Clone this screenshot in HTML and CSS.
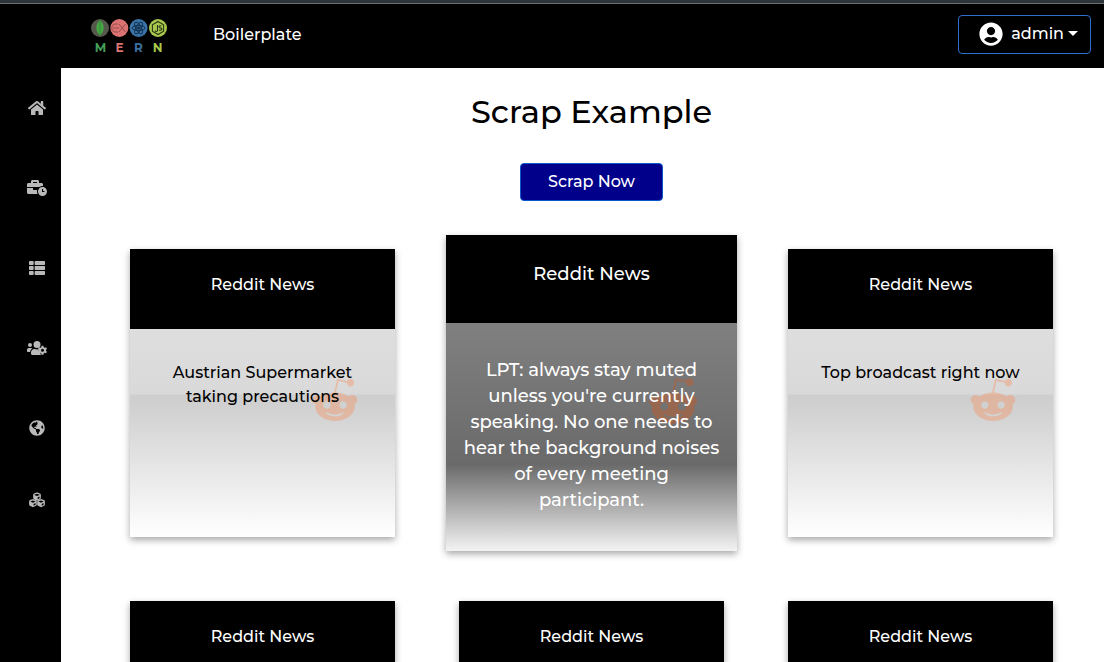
FILE: index.html
```html
<!DOCTYPE html>
<html lang="en">
<head>
<meta charset="utf-8">
<meta name="viewport" content="width=device-width, initial-scale=1">
<title>MERN Boilerplate</title>
<link rel="stylesheet" href="styles.css">
</head>
<body>
<svg class="sprite" aria-hidden="true">
  <symbol id="reddit" viewBox="0 0 512 512"><path d="M440.3 203.5c-15 0-28.2 6.2-37.9 15.9-35.7-24.7-83.8-40.6-137.1-42.3L293 52.3l88.2 19.8c0 21.6 17.6 39.2 39.2 39.2 22 0 39.7-18.1 39.7-39.7s-17.6-39.7-39.7-39.7c-15.4 0-28.7 9.3-35.3 22l-97.4-21.6c-4.9-1.3-9.7 2.2-11 7.1L246.3 177c-52.9 2.2-100.5 18.1-136.3 42.8-9.7-10.1-23.4-16.3-38.4-16.3-55.6 0-73.8 74.6-22.9 100.1-1.8 7.9-2.6 16.3-2.6 24.7 0 83.8 94.4 151.7 210.3 151.7 116.4 0 210.8-67.9 210.8-151.7 0-8.4-.9-17.2-3.1-25.1 49.9-25.6 31.5-99.7-23.8-99.7zM129.4 308.9c0-22 17.6-39.7 39.7-39.7 21.6 0 39.2 17.6 39.2 39.7 0 21.6-17.6 39.2-39.2 39.2-22 .1-39.7-17.6-39.7-39.2zm214.3 93.5c-36.4 36.4-139.1 36.4-175.5 0-4-3.5-4-9.7 0-13.7 3.5-3.5 9.7-3.5 13.2 0 27.8 28.5 120 29 149 0 3.5-3.5 9.7-3.5 13.2 0 4.1 4 4.1 10.2.1 13.7zm-.8-54.2c-21.6 0-39.2-17.6-39.2-39.2 0-22 17.6-39.7 39.2-39.7 22 0 39.7 17.6 39.7 39.7-.1 21.5-17.7 39.2-39.7 39.2z"/></symbol>
</svg>
<header class="topbar">
  <a class="logo" href="#" aria-label="MERN">
    <svg class="logo-marks" viewBox="0 0 76 20" aria-hidden="true">
      <circle cx="9" cy="10" r="9" fill="#55594b"/>
      <path d="M9 2C12 5 13 8 12.500 11.500 12 14 10.500 16 9 17.500 7.500 16 6 14 5.500 11.500 5 8 6 5 9 2z" fill="#44a843"/>
      <path d="M9 2v16" stroke="#2d7e35" stroke-width=".7"/>
      <circle cx="28.300" cy="10" r="9" fill="#dc7272"/>
      <path d="M27 6h-2.500c-5 0-5 8 0 8H27M22 10h6M28 6l6.500 8M34.500 6L28 14" fill="none" stroke="#8d4b4b" stroke-width=".9"/>
      <circle cx="47.600" cy="10" r="9" fill="#3a73a8"/>
      <g fill="none" stroke="#12304d" stroke-width="1">
        <ellipse cx="47.600" cy="10" rx="6.500" ry="2.500"/>
        <ellipse cx="47.600" cy="10" rx="6.500" ry="2.500" transform="rotate(60 47.600 10)"/>
        <ellipse cx="47.600" cy="10" rx="6.500" ry="2.500" transform="rotate(120 47.600 10)"/>
      </g>
      <circle cx="47.600" cy="10" r="1.500" fill="#12304d"/>
      <circle cx="67" cy="10" r="9" fill="#a9c84c"/>
      <path d="M67 3.500l5.600 3.200v6.600L67 16.500l-5.600-3.200V6.700zM66.500 7v5.500c0 1.200-2 1.200-2.500.3M70.500 8c-2.800-1-3.300 1.500-1.200 1.900 2.500.4 2 3.100-1.300 2" fill="none" stroke="#26361a" stroke-width="1.100"/>
    </svg>
    <span class="logo-letters"><b class="m">M</b><b class="e">E</b><b class="r">R</b><b class="n">N</b></span>
  </a>
  <span class="brand">Boilerplate</span>
  <button class="user" type="button">
    <svg class="avatar" viewBox="0 0 496 512" aria-hidden="true"><path d="M248 8C111 8 0 119 0 256s111 248 248 248 248-111 248-248S385 8 248 8zm0 96c48.600 0 88 39.400 88 88s-39.400 88-88 88-88-39.400-88-88 39.400-88 88-88zm0 344c-58.700 0-111.300-26.600-146.500-68.200 18.800-35.400 55.600-59.800 98.500-59.800 2.400 0 4.800.4 7.100 1.100 13 4.200 26.600 6.900 40.900 6.900 14.300 0 28-2.700 40.900-6.900 2.300-.7 4.700-1.100 7.100-1.100 42.900 0 79.700 24.400 98.500 59.800C359.300 421.400 306.700 448 248 448z"/></svg>
    <span>admin</span>
    <span class="caret"></span>
  </button>
</header>
<div class="shell">
  <nav class="sidebar" aria-label="Main">
    <a href="#" aria-label="Home"><svg class="wide" viewBox="0 0 576 512"><path d="M280.370 148.260L96 300.110V464a16 16 0 0 0 16 16l112.060-.29a16 16 0 0 0 15.920-16V368a16 16 0 0 1 16-16h64a16 16 0 0 1 16 16v95.640a16 16 0 0 0 16 16.050L464 480a16 16 0 0 0 16-16V300L295.670 148.260a12.190 12.190 0 0 0-15.300 0zM571.600 251.470L488 182.560V44.050a12 12 0 0 0-12-12h-56a12 12 0 0 0-12 12v72.610L318.470 43a48 48 0 0 0-61 0L4.340 251.470a12 12 0 0 0-1.600 16.900l25.500 31A12 12 0 0 0 45.150 301l235.220-193.740a12.190 12.190 0 0 1 15.300 0L530.900 301a12 12 0 0 0 16.900-1.600l25.500-31a12 12 0 0 0-1.700-16.930z"/></svg></a>
    <a href="#" aria-label="Jobs"><svg class="wide" viewBox="0 0 640 512"><path d="M496 224c-79.590 0-144 64.410-144 144s64.410 144 144 144 144-64.410 144-144-64.410-144-144-144zm64 150.290c0 5.340-4.370 9.710-9.710 9.710h-60.570c-5.340 0-9.710-4.370-9.710-9.710v-76.570c0-5.340 4.370-9.710 9.710-9.710h12.570c5.340 0 9.710 4.370 9.710 9.710V352h38.290c5.340 0 9.710 4.370 9.710 9.710v12.580zM496 192c5.400 0 10.720.33 16 .81V144c0-25.600-22.400-48-48-48h-80V48c0-25.600-22.400-48-48-48H176c-25.600 0-48 22.400-48 48v48H48c-25.600 0-48 22.400-48 48v80h395.120c28.600-20.090 63.350-32 100.880-32zM320 96H192V64h128v32zm6.820 224H208c-8.840 0-16-7.160-16-16v-48H0v144c0 25.600 22.400 48 48 48h291.430C327.100 423.960 320 396.820 320 368c0-16.660 2.480-32.720 6.820-48z"/></svg></a>
    <a href="#" aria-label="List"><svg viewBox="0 0 512 512"><path d="M24 32h101a24 24 0 0 1 24 24v80a24 24 0 0 1-24 24H24a24 24 0 0 1-24-24V56a24 24 0 0 1 24-24zM24 192h101a24 24 0 0 1 24 24v80a24 24 0 0 1-24 24H24a24 24 0 0 1-24-24v-80a24 24 0 0 1 24-24zM24 352h101a24 24 0 0 1 24 24v80a24 24 0 0 1-24 24H24a24 24 0 0 1-24-24v-80a24 24 0 0 1 24-24zM205 32h283a24 24 0 0 1 24 24v80a24 24 0 0 1-24 24H205a24 24 0 0 1-24-24V56a24 24 0 0 1 24-24zM205 192h283a24 24 0 0 1 24 24v80a24 24 0 0 1-24 24H205a24 24 0 0 1-24-24v-80a24 24 0 0 1 24-24zM205 352h283a24 24 0 0 1 24 24v80a24 24 0 0 1-24 24H205a24 24 0 0 1-24-24v-80a24 24 0 0 1 24-24z"/></svg></a>
    <a href="#" aria-label="Users"><svg class="wide" viewBox="0 0 640 512">
      <circle cx="96" cy="160" r="64"/><circle cx="320" cy="144" r="112"/>
      <path d="M64 256h64c18 0 34 7 45 19-40 22-68 61-74 109H32c-18 0-32-14-32-32v-32c0-35 29-64 64-64zM243 288h9c40 19 88 20 130 2-18 62 5 119 58 150v40H176c-27 0-48-21-48-48v-29c0-64 51-115 115-115z"/>
      <path fill-rule="evenodd" d="M466 186h60l8 43 34 20 41-15 30 52-33 28v32l33 28-30 52-41-15-34 20-8 43h-60l-8-43-34-20-41 15-30-52 33-28v-32l-33-28 30-52 41 15 34-20zM496 282a48 48 0 1 0 0 96 48 48 0 0 0 0-96z"/>
    </svg></a>
    <a href="#" aria-label="World"><svg viewBox="0 0 496 512"><path d="M248 8C111.030 8 0 119.030 0 256s111.030 248 248 248 248-111.030 248-248S384.970 8 248 8zm82.290 357.600c-3.900 3.880-7.990 7.950-11.310 11.280-2.990 3-5.100 6.700-6.170 10.710-1.510 5.660-2.730 11.380-4.770 16.870l-17.390 46.850c-13.760 3-28 4.690-42.650 4.690v-27.380c1.690-12.620-7.640-36.260-22.630-51.250-6-6-9.370-14.140-9.370-22.630v-32.010c0-11.640-6.270-22.340-16.460-27.970-14.370-7.950-34.810-19.060-48.810-26.110-11.480-5.780-22.100-13.140-31.650-21.750l-.8-.72a114.792 114.792 0 0 1-18.060-20.740c-9.380-13.770-24.660-36.420-34.590-51.140 20.470-45.500 57.360-82.040 103.200-101.890l24.010 12.010C203.480 89.740 216 82.010 216 70.110v-11.300c7.990-1.290 16.120-2.110 24.390-2.420l28.300 28.300c6.250 6.250 6.250 16.380 0 22.630L264 112l-10.340 10.340c-3.120 3.120-3.120 8.190 0 11.310l4.690 4.690c3.120 3.120 3.120 8.190 0 11.310l-8 8a8.008 8.008 0 0 1-5.660 2.340h-8.990c-2.080 0-4.080.81-5.580 2.270l-9.920 9.650a8.008 8.008 0 0 0-1.580 9.310l15.590 31.190c2.660 5.320-1.210 11.580-7.150 11.580h-5.640c-1.930 0-3.790-.7-5.240-1.960l-9.280-8.060a16.017 16.017 0 0 0-15.550-3.100l-31.170 10.390a11.950 11.950 0 0 0-8.170 11.340c0 4.530 2.560 8.660 6.610 10.690l11.080 5.540c9.410 4.710 19.790 7.160 30.310 7.160s22.590 27.290 32 32h66.750c8.490 0 16.620 3.370 22.630 9.370l13.690 13.690a30.503 30.503 0 0 1 8.930 21.570 46.536 46.536 0 0 1-13.720 32.980zM417 274.250c-5.790-1.450-10.840-5-14.150-9.970l-17.980-26.970a23.970 23.970 0 0 1 0-26.620l19.590-29.380c2.320-3.470 5.500-6.290 9.240-8.150l12.980-6.490C440.200 193.590 448 223.870 448 256c0 8.670-.74 17.160-1.820 25.540L417 274.250z"/></svg></a>
    <a class="last" href="#" aria-label="Modules"><svg viewBox="0 0 512 512">
      <g id="cube"><path fill-rule="evenodd" d="M239 18a48 48 0 0 1 34 0l76 29c18 7 30 24 30 43v97c0 18-10 34-26 42l-80 40a48 48 0 0 1-34 0l-80-40c-16-8-26-24-26-42V90c0-19 12-36 30-43zM256 56l-86 32v4l86 36 86-36v-4zM276 170v58l62-31v-54z"/></g>
      <use href="#cube" x="-130" y="212"/><use href="#cube" x="130" y="212"/>
    </svg></a>
  </nav>
  <main class="content">
    <h1>Scrap Example</h1>
    <button class="scrap" type="button">Scrap Now</button>
    <section class="cards">
      <article class="card">
        <h2>Reddit News</h2>
        <div class="body"><svg class="alien" aria-hidden="true"><use href="#reddit"/></svg><p>Austrian Supermarket taking precautions</p></div>
      </article>
      <article class="card active">
        <h2>Reddit News</h2>
        <div class="body"><svg class="alien" aria-hidden="true"><use href="#reddit"/></svg><p>LPT: always stay muted unless you're currently speaking. No one needs to hear the background noises of every meeting participant.</p></div>
      </article>
      <article class="card">
        <h2>Reddit News</h2>
        <div class="body"><svg class="alien" aria-hidden="true"><use href="#reddit"/></svg><p>Top broadcast right now</p></div>
      </article>
      <article class="card"><h2>Reddit News</h2><div class="body"></div></article>
      <article class="card"><h2>Reddit News</h2><div class="body"></div></article>
      <article class="card"><h2>Reddit News</h2><div class="body"></div></article>
    </section>
  </main>
</div>
</body>
</html>
```
FILE: styles.css
```css
* { box-sizing: border-box; }

body {
  margin: 0;
  height: 100vh;
  display: flex;
  flex-direction: column;
  overflow: hidden;
  background: #fff;
  color: #000;
  font: 500 16px/24px Montserrat, Inter, sans-serif;
}

a { color: inherit; text-decoration: none; }
button { font: inherit; cursor: pointer; }
.sprite { display: none; }

.topbar {
  flex: none;
  display: flex;
  align-items: center;
  height: 68px;
  padding: 0 13px 0 91px;
  background: linear-gradient(#2c3439 3px, #697073 3px, #697073 4px, #000 4px);
  color: #fff;
}

.logo {
  display: flex;
  flex-direction: column;
  width: 76px;
  margin-right: 46px;
  padding-top: 4px;
}
.logo-marks { width: 76px; height: 20px; }
.logo-letters {
  display: grid;
  grid-template-columns: repeat(4, 1fr);
  padding-top: 4px;
  text-align: center;
  font-size: 12px;
  line-height: 12px;
}
.m { color: #44a05a; }
.e { color: #dd7474; }
.r { color: #3b6f9f; }
.n { color: #a9c84c; }

.brand { padding-top: 2px; }

.user {
  display: flex;
  align-items: center;
  gap: 8px;
  height: 39px;
  margin-left: auto;
  padding: 0 12px 0 20px;
  border: 1px solid #2f6fd0;
  border-radius: 4px;
  background: #000;
  color: #fff;
}
.avatar { width: 24px; height: 24px; fill: #fff; }
.caret {
  margin: -2px 0 0 -4px;
  border: 5px solid transparent;
  border-top-color: #fff;
  border-bottom: 0;
}

.shell { flex: 1; display: flex; min-height: 0; }

.sidebar {
  flex: none;
  display: flex;
  flex-direction: column;
  width: 61px;
  padding-left: 13px;
  background: #000;
}
.sidebar a {
  display: flex;
  align-items: center;
  justify-content: center;
  height: 80px;
}
.sidebar .last { height: 64px; }
.sidebar svg { width: 16px; height: 16px; fill: #b9b9b9; }
.sidebar .wide { width: 20px; }

.content {
  flex: 1;
  display: flex;
  flex-direction: column;
  align-items: center;
  padding: 24px 51px 0 69px;
}

h1 {
  margin: 0;
  font-size: 32px;
  line-height: 40px;
  font-weight: 500;
}

.scrap {
  flex: none;
  height: 38px;
  margin: 31px 0 48px;
  padding: 0 27px;
  border: 1px solid #0a58ca;
  border-radius: 4px;
  background: #00008b;
  color: #fff;
}

.cards {
  align-self: stretch;
  display: grid;
  grid-template-columns: repeat(3, 1fr);
  grid-auto-rows: 288px;
  gap: 64px;
}

.card {
  display: flex;
  flex-direction: column;
  box-shadow: 0 3px 7px rgba(0, 0, 0, .35);
  text-align: center;
}
.card h2 {
  margin: 0;
  padding: 24px 0 32px;
  background: #000;
  color: #fff;
  font-size: 16px;
  line-height: 24px;
  font-weight: 500;
}
.card p { position: relative; margin: 0; }

.body {
  position: relative;
  flex: 1;
  padding: 32px 24px;
  background: linear-gradient(#dedede, #d9d9d9 31%, #cecece 32%, #d2d2d2 40%, #fff);
}

.alien {
  position: absolute;
  top: 47px;
  right: 36px;
  width: 48px;
  height: 48px;
  fill: #ff8040;
  opacity: .32;
}

.active { margin: -14px -13px; }
.active h2 {
  padding: 26px 0 36px;
  font-size: 18px;
  line-height: 26px;
}
.active .body {
  padding: 34px 16px;
  background: linear-gradient(#808080, #6a6a6a 62%, #f3f3f3);
  color: #fff;
  font-size: 18px;
  line-height: 26px;
}
.active .alien { top: 52px; right: 38px; width: 52px; height: 52px; fill: #d0561a; opacity: .4; }
```
